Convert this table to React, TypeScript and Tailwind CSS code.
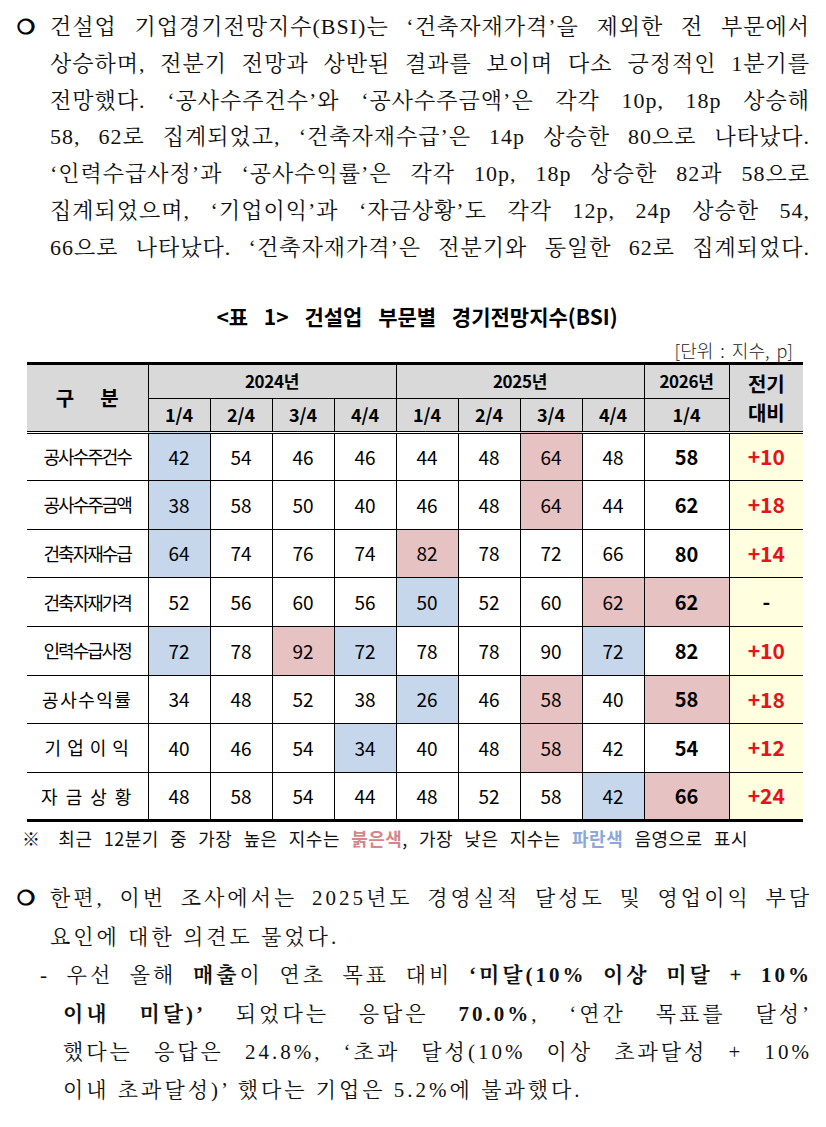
import type { ReactNode } from "react";

const SERIF = "font-['Liberation_Serif','Noto_Serif_CJK_KR','Noto_Sans_CJK_KR',serif]";
const SANS = "font-['Noto_Sans_CJK_KR',sans-serif]";

// 9 data cells per row: 2024 1/4..4/4, 2025 1/4..4/4, 2026 1/4
// hl: b = lowest (blue), r = highest (red)
const ROWS = [
  { label: "공사수주건수", cls: "tracking-[-2px]", vals: [42, 54, 46, 46, 44, 48, 64, 48, 58], hl: "b.....r..", diff: "+10" },
  { label: "공사수주금액", cls: "tracking-[-2px]", vals: [38, 58, 50, 40, 46, 48, 64, 44, 62], hl: "b.....r..", diff: "+18" },
  { label: "건축자재수급", cls: "tracking-[-2px]", vals: [64, 74, 76, 74, 82, 78, 72, 66, 80], hl: "b...r....", diff: "+14" },
  { label: "건축자재가격", cls: "tracking-[-2px]", vals: [52, 56, 60, 56, 50, 52, 60, 62, 62], hl: "....b..rr", diff: "-" },
  { label: "인력수급사정", cls: "tracking-[-2px]", vals: [72, 78, 92, 72, 78, 78, 90, 72, 82], hl: "b.rb...b.", diff: "+10" },
  { label: "공사수익률", cls: "tracking-[1.5px]", vals: [34, 48, 52, 38, 26, 46, 58, 40, 58], hl: "....b.r.r", diff: "+18" },
  { label: "기 업 이 익", cls: "tracking-[1px]", vals: [40, 46, 54, 34, 40, 48, 58, 42, 54], hl: "...b..r..", diff: "+12" },
  { label: "자 금 상 황", cls: "tracking-[2px]", vals: [48, 58, 54, 44, 48, 52, 58, 42, 66], hl: ".......br", diff: "+24" },
];

const QUARTERS = ["1/4", "2/4", "3/4", "4/4", "1/4", "2/4", "3/4", "4/4", "1/4"];

function J({ children, className = "" }: { children: ReactNode; className?: string }) {
  return <div className={`text-justify [text-align-last:justify] ${className}`}>{children}</div>;
}

function Bullet() {
  return (
    <span className="w-[33px] shrink-0 font-['DejaVu_Sans'] text-[20px] font-bold tracking-normal [-webkit-text-stroke:1.2px_black]">
      ❍
    </span>
  );
}

function cellBg(h: string) {
  if (h === "b") return "bg-[#c6d6eb]";
  if (h === "r") return "bg-[#e7c2c3]";
  return "";
}

export default function App() {
  return (
    <div className="w-[826px] h-[1127px] bg-white text-black overflow-hidden">
      {/* 본문 1 */}
      <div className={`flex pt-[9px] pl-[17px] text-[22px] leading-[36.8px] tracking-[1px] text-[#111] ${SERIF}`}>
        <Bullet />
        <div className="w-[760px]">
          <J>건설업 기업경기전망지수(BSI)는 ‘건축자재가격’을 제외한 전 부문에서</J>
          <J>상승하며, 전분기 전망과 상반된 결과를 보이며 다소 긍정적인 1분기를</J>
          <J>전망했다. ‘공사수주건수’와 ‘공사수주금액’은 각각 10p, 18p 상승해</J>
          <J>58, 62로 집계되었고, ‘건축자재수급’은 14p 상승한 80으로 나타났다.</J>
          <J>‘인력수급사정’과 ‘공사수익률’은 각각 10p, 18p 상승한 82과 58으로</J>
          <J>집계되었으며, ‘기업이익’과 ‘자금상황’도 각각 12p, 24p 상승한 54,</J>
          <J>66으로 나타났다. ‘건축자재가격’은 전분기와 동일한 62로 집계되었다.</J>
        </div>
      </div>

      {/* 표 제목 */}
      <div className={`mt-[37px] pl-[8px] text-center text-[21px] leading-[24px] font-bold [word-spacing:11px] ${SANS}`}>
        &lt;표 1&gt; 건설업 부문별 경기전망지수(BSI)
      </div>
      <div className={`mt-[12px] w-[793px] text-right text-[18px] leading-[20px] font-light text-[#222] [word-spacing:3px] ${SANS}`}>
        [단위 : 지수, p]
      </div>

      {/* 표 */}
      <table className={`mt-[2px] ml-[27px] w-[776px] table-fixed border-collapse ${SANS}`}>
        <colgroup>
          <col className="w-[121px]" />
          {QUARTERS.slice(0, 8).map((_, i) => (
            <col key={i} className="w-[62px]" />
          ))}
          <col className="w-[85px]" />
          <col className="w-[74px]" />
        </colgroup>
        <thead>
          <tr className="bg-[#d9d9d9]">
            <th
              rowSpan={2}
              className="border-t-[3px] border-r border-b-[3px] [border-bottom-style:double] border-black text-[20px] font-bold"
            >
              <div className="flex justify-center gap-[26px]">
                <span>구</span>
                <span>분</span>
              </div>
            </th>
            <th colSpan={4} className="h-[35px] border-t-[3px] border-r border-b border-black text-[17px] font-bold tracking-[-0.3px]">
              2024년
            </th>
            <th colSpan={4} className="border-t-[3px] border-r border-b border-black text-[17px] font-bold tracking-[-0.3px]">
              2025년
            </th>
            <th className="border-t-[3px] border-r border-b border-black text-[17px] font-bold tracking-[-0.3px]">2026년</th>
            <th
              rowSpan={2}
              className="border-t-[3px] border-b-[3px] [border-bottom-style:double] border-black text-[20px] leading-[29px] font-bold"
            >
              <div>전기</div>
              <div>대비</div>
            </th>
          </tr>
          <tr className="bg-[#d9d9d9]">
            {QUARTERS.map((q, i) => (
              <th
                key={i}
                className="h-[34px] border-r border-b-[3px] [border-bottom-style:double] border-black text-[18px] font-bold"
              >
                {q}
              </th>
            ))}
          </tr>
        </thead>
        <tbody>
          {ROWS.map((r, ri) => {
            const last = ri === ROWS.length - 1;
            const rowB = last ? "border-b-[3px]" : "border-b";
            return (
              <tr key={r.label}>
                <td className={`h-[48.6px] border-r ${rowB} border-black text-center text-[18px] ${r.cls}`}>{r.label}</td>
                {r.vals.map((v, ci) => (
                  <td
                    key={ci}
                    className={`border-r ${rowB} border-black text-center ${cellBg(r.hl[ci])} ${
                      ci === 8 ? "text-[20px] font-bold" : "text-[19px]"
                    }`}
                  >
                    {v}
                  </td>
                ))}
                <td
                  className={`${rowB} border-black bg-[#ffffe0] text-center text-[21px] font-bold ${
                    r.diff === "-" ? "text-black" : "text-[#e3141b]"
                  }`}
                >
                  {r.diff}
                </td>
              </tr>
            );
          })}
        </tbody>
      </table>

      {/* 주석 */}
      <div
        className={`mt-[5px] ml-[22px] w-[726px] text-[18px] leading-[22px] tracking-[0.5px] text-[#111] text-justify [text-align-last:justify] ${SANS}`}
      >
        ※ 최근 12분기 중 가장 높은 지수는 <span className="font-bold text-[#d4878a]">붉은색</span>, 가장 낮은 지수는{" "}
        <span className="font-bold text-[#8ca8d8]">파란색</span> 음영으로 표시
      </div>

      {/* 본문 2 */}
      <div className={`flex mt-[30px] pl-[17px] text-[21px] leading-[38.4px] tracking-[3px] text-[#111] ${SERIF}`}>
        <Bullet />
        <div className="w-[762px]">
          <J>한편, 이번 조사에서는 2025년도 경영실적 달성도 및 영업이익 부담</J>
          <div>요인에 대한 의견도 물었다.</div>
          <J className="-ml-[10px]">
            - 우선 올해 <b>매출</b>이 연초 목표 대비 <b>‘미달(10% 이상 미달 + 10%</b>
          </J>
          <J className="pl-[13px]">
            <b>이내 미달)’</b> 되었다는 응답은 <b>70.0%</b>, ‘연간 목표를 달성’
          </J>
          <J className="pl-[13px]">했다는 응답은 24.8%, ‘초과 달성(10% 이상 초과달성 + 10%</J>
          <div className="pl-[13px]">이내 초과달성)’ 했다는 기업은 5.2%에 불과했다.</div>
        </div>
      </div>
    </div>
  );
}
